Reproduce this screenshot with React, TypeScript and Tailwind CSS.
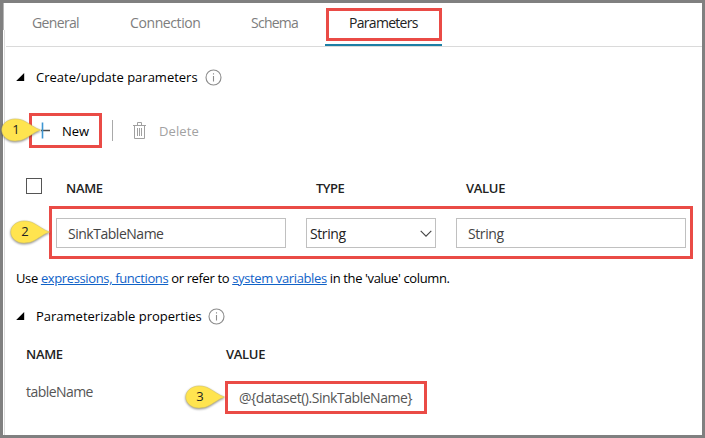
import React from "react";

function Callout({ n, className }: { n: number; className: string }) {
  return (
    <div className={`absolute h-[28px] w-[42px] ${className}`}>
      <svg width="42" height="28" viewBox="0 0 42 28" className="absolute inset-0 overflow-visible">
        <path
          d="M39.5 12 C34 10.5 28 5 22 2.4 C19 1.3 16.5 1 14 1 C6.5 1 0.8 6 0.8 12 C0.8 18 6.5 23 14 23 C16.5 23 19 22.7 22 21.6 C28 19 34 13.5 39.5 12 Z"
          fill="#ffe44f"
          stroke="#d9c65c"
          strokeWidth="0.6"
          className="drop-shadow-[0px_1px_1px_rgba(0,0,0,0.45)]"
        />
      </svg>
      <span className="absolute left-[8px] top-0 w-[14px] text-center text-[13px] leading-[22px] text-[#222]">{n}</span>
    </div>
  );
}

function InfoIcon() {
  return (
    <svg width="17" height="17" viewBox="0 0 17 17" fill="none" className="shrink-0">
      <circle cx="8.5" cy="8.5" r="7.5" stroke="#8c8c8c" strokeWidth="1.1" />
      <path d="M8.5 7v5.5M8.5 4.2v1.3" stroke="#8c8c8c" strokeWidth="1.1" />
    </svg>
  );
}

function Triangle() {
  return (
    <svg width="9" height="9" viewBox="0 0 9 9" className="mr-[11px] shrink-0">
      <path d="M8.2 0V8H0.2Z" fill="#000" />
    </svg>
  );
}

export default function App() {
  return (
    <div className="relative h-[438px] w-[705px] whitespace-nowrap border-[3px] border-[#808080] bg-white font-['Open_Sans','Noto_Sans',sans-serif] text-[13px] text-black">
      <div className="absolute left-0 top-0 h-[27px] w-px bg-[#b5b5b5]" />
      <div className="absolute bottom-0 left-px top-[27px] w-px bg-[#dcdcdc]" />

      <nav className="ml-[3px] flex h-[44px] items-start border-b border-[#dadada] pl-[26px] text-[14px] leading-[40px] text-[#7d7d7d]">
        <span className="w-[98px] tracking-[-0.65px]">General</span>
        <span className="w-[121px] tracking-[-0.4px]">Connection</span>
        <span className="w-[74px] tracking-[-0.75px]">Schema</span>
        <div className="flex h-[43px] w-[117px] flex-col justify-between border-b-2 border-[#1c7fa5] pl-px pt-[5px]">
          <div className="h-[33px] border-[3px] border-[#ea4b46] pl-[20px] leading-[24px] tracking-[-0.7px] text-[#222]">Parameters</div>
        </div>
      </nav>

      <section>
        <div className="mt-[15px] flex h-[30px] items-center pl-[13px]">
          <Triangle />
          <span className="mt-[2px] w-[169px]">Create/update parameters</span>
          <InfoIcon />
        </div>

        <div className="mt-[21px] flex h-[35px] items-center pl-[26px]">
          <div className="flex h-[35px] w-[73px] items-center border-[3px] border-[#ea4b46] pl-[9px]">
            <svg width="10" height="17" viewBox="0 0 10 17" className="mr-[11px]">
              <path d="M0 8.5h9" stroke="#4a4a4a" strokeWidth="1.5" />
              <path d="M1.5 0.5v16" stroke="#3f96d2" strokeWidth="1.6" />
            </svg>
            <span className="mt-[2px]">New</span>
          </div>
          <div className="ml-[10px] h-[21px] w-px bg-[#a9a9a9]" />
          <svg width="13" height="17" viewBox="0 0 13 17" fill="none" stroke="#a0a0a0" className="ml-[20px] mr-[13px]">
            <path d="M0 3.5h13M4.5 3V0.5h4V3M1.5 4v12.5h10V4M4.5 6v8M6.5 6v8M8.5 6v8" />
          </svg>
          <span className="mt-[2px] tracking-[0.1px] text-[#a2a2a2]">Delete</span>
        </div>

        <div className="mt-[30px] flex h-[20px] items-start pl-[23px] font-semibold leading-[20px] text-[#222]">
          <div className="mr-[24px] size-[16px] border border-[#555]" />
          <span className="w-[250px] tracking-[-0.3px]">NAME</span>
          <span className="w-[150px] tracking-[-0.5px]">TYPE</span>
          <span className="tracking-[-0.3px]">VALUE</span>
        </div>

        <div className="ml-[46px] mt-[8px] flex h-[53px] w-[644px] gap-[20px] border-[3px] border-[#ea4b46] pl-[4px] pt-[9px] text-[14px] leading-[29px] text-[#444]">
          <div className="h-[30px] w-[230px] border border-[#c0c0c0] pl-[11px] tracking-[-0.48px]">SinkTableName</div>
          <div className="flex h-[30px] w-[130px] justify-between border border-[#c0c0c0] pl-[3px] pr-[3px] text-[#222]">
            <span className="tracking-[-0.4px]">String</span>
            <svg width="12" height="8" viewBox="0 0 12 8" fill="none" className="mt-[11px]">
              <path d="M0.7 0.8L6 6.1l5.3-5.3" stroke="#444" strokeWidth="1.1" />
            </svg>
          </div>
          <div className="h-[30px] w-[230px] border border-[#c0c0c0] pl-[11px] tracking-[-0.4px]">String</div>
        </div>

        <p className="mt-[9px] h-[20px] pl-[13px] leading-[20px] tracking-[-0.37px]">
          Use <a className="text-[#0f62c8] underline">expressions, functions</a> or refer to{" "}
          <a className="text-[#0f62c8] underline">system variables</a> in the 'value' column.
        </p>
      </section>

      <section>
        <div className="mt-[13px] flex h-[30px] items-center pl-[13px]">
          <Triangle />
          <span className="mt-[2px] w-[172px]">Parameterizable properties</span>
          <InfoIcon />
        </div>
        <div className="mt-[13px] flex h-[20px] pl-[23px] font-semibold leading-[20px] text-[#222]">
          <span className="w-[200px] tracking-[-0.3px]">NAME</span>
          <span className="tracking-[-0.3px]">VALUE</span>
        </div>
        <div className="mt-[17px] flex h-[33px] pl-[23px] text-[14px] text-[#555]">
          <span className="w-[199px] leading-[22px] tracking-[-0.55px]">tableName</span>
          <div className="h-[33px] w-[202px] border-[3px] border-[#ea4b46] pl-[11px] leading-[28px] tracking-[-0.47px]">{"@{dataset().SinkTableName}"}</div>
        </div>
      </section>

      <Callout n={1} className="left-[-2px] top-[115px]" />
      <Callout n={2} className="left-[7px] top-[217px]" />
      <Callout n={3} className="left-[182px] top-[382px]" />
    </div>
  );
}
